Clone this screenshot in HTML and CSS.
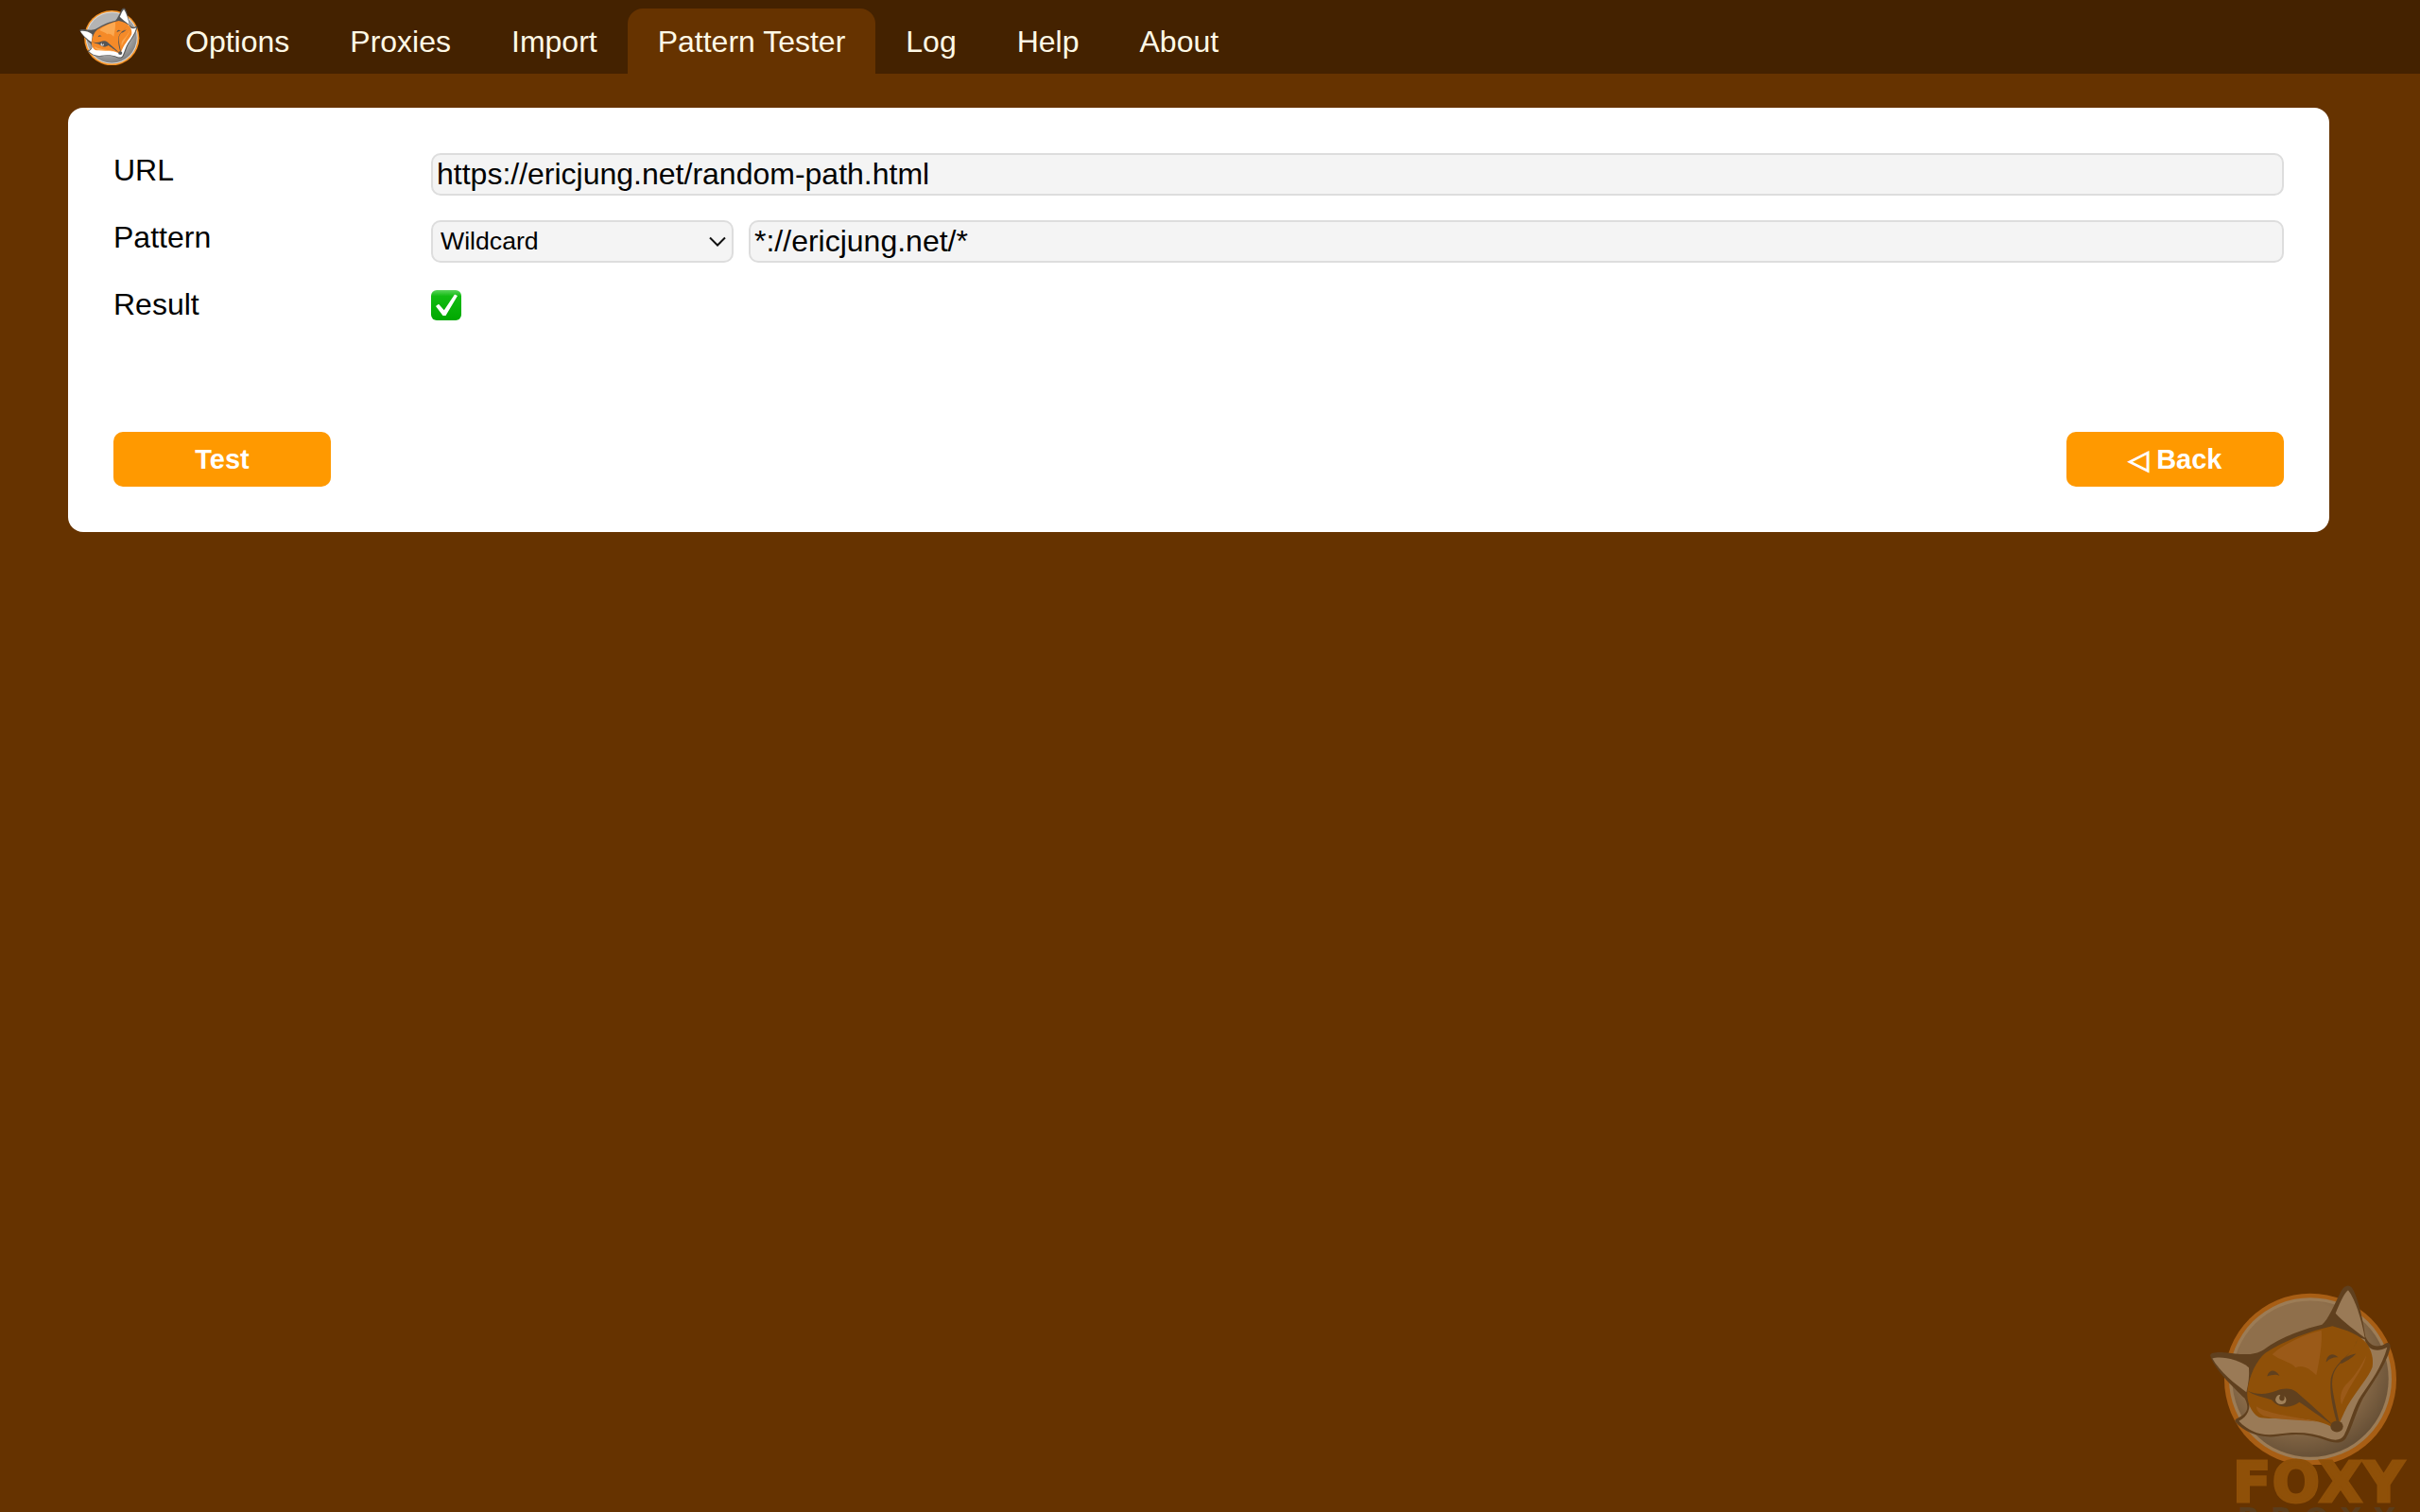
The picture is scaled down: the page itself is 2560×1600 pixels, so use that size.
FILE: index.html
```html
<!DOCTYPE html>
<html lang="en">
<head>
<meta charset="utf-8">
<title>FoxyProxy Options</title>
<link rel="stylesheet" href="styles.css">
</head>
<body>
<svg class="sprite" aria-hidden="true">
  <defs>
    <radialGradient id="disc-shade" gradientUnits="userSpaceOnUse" cx="400" cy="300" r="310">
      <stop offset="0.62" stop-color="#000" stop-opacity="0"/>
      <stop offset="1" stop-color="#000" stop-opacity="0.28"/>
    </radialGradient>
    <symbol id="fox" viewBox="112 58 600 572">
      <circle class="f-ring" cx="433" cy="360" r="273"/>
      <circle class="f-rim" cx="433" cy="358" r="258"/>
      <circle class="f-disc" cx="433" cy="358" r="248"/>
      <circle cx="433" cy="358" r="248" fill="url(#disc-shade)"/>
      <path class="f-line" d="M116 286C112 276 130 272 160 274C205 278 250 288 285 265C340 225 420 197 470 186C490 170 510 120 530 80C540 62 556 56 566 70C585 100 600 170 608 225C620 250 640 262 668 248C680 238 690 245 686 262C670 320 630 370 600 420C578 460 568 510 545 548C530 565 505 562 480 552C430 532 380 530 330 540C280 548 225 530 195 495C190 485 205 482 220 472C238 458 235 440 225 420C190 385 130 330 116 286Z"/>
      <path class="f-ear" d="M513 150C525 120 540 85 553 76C575 105 595 165 606 228C575 205 535 175 513 150Z"/>
      <path class="f-ear" d="M122 293C150 285 205 295 238 322C240 350 236 375 230 400C195 375 145 335 122 293Z"/>
      <path class="f-ear" d="M606 232C612 262 640 277 677 258C660 320 625 367 595 410C570 447 560 497 540 537C530 554 510 554 490 547C440 527 385 524 330 533C280 541 240 528 206 492C235 478 246 450 236 420L260 400L500 200Z"/>
      <path class="f-face" d="M233 395C240 345 262 300 290 276C350 236 430 206 503 190C550 203 590 218 612 245C628 270 634 295 630 320C620 350 580 395 550 445C535 475 530 490 524 498L500 510C470 492 420 484 360 482C320 482 290 486 270 480C245 465 230 430 233 395Z"/>
      <path class="f-glow" d="M312 280C350 245 420 215 468 204C472 240 462 300 452 346C430 325 410 312 386 322C375 305 335 298 312 280Z"/>
      <path class="f-glow" d="M610 285C604 325 560 370 532 440C524 412 532 388 552 370C578 345 594 315 610 285Z"/>
      <path class="f-glow" d="M262 445C300 470 390 478 455 494C400 486 330 490 285 475C270 466 262 458 262 445Z"/>
      <path class="f-line" d="M232 394C262 410 295 408 325 396C345 388 370 385 390 400C430 435 475 475 505 505C465 480 420 445 398 432C375 450 335 455 310 424C285 415 250 410 232 394Z"/>
      <path class="f-eye" d="M322 424C324 412 334 406 338 410C332 416 334 428 344 428C352 426 352 418 350 412C360 420 358 434 346 438C334 441 324 435 322 424Z"/>
      <path class="f-line" d="M296 350C300 332 318 322 335 348C325 342 310 344 296 350Z"/>
      <path class="f-line" d="M483 305C485 285 500 270 522 290C510 288 495 292 483 305Z"/>
      <path class="f-line" d="M583 230C575 262 545 290 518 320C505 340 498 360 505 400C510 430 518 465 524 492L516 492C506 455 495 410 497 370C498 335 520 310 545 288C560 275 575 255 583 230Z"/>
      <path class="f-line" d="M530 300C550 285 565 280 578 278C565 292 548 302 530 310Z"/>
      <ellipse class="f-line" cx="517" cy="509" rx="20" ry="18"/>
    </symbol>
  </defs>
</svg>

<nav class="topbar">
  <svg class="fox fox-nav"><use href="#fox"/></svg>
  <a class="tab">Options</a>
  <a class="tab">Proxies</a>
  <a class="tab">Import</a>
  <a class="tab tab-active">Pattern Tester</a>
  <a class="tab">Log</a>
  <a class="tab">Help</a>
  <a class="tab">About</a>
</nav>

<main class="card">
  <div class="form">
    <label class="label">URL</label>
    <input class="field" type="text" value="https://ericjung.net/random-path.html">
    <label class="label">Pattern</label>
    <div class="pattern">
      <span class="select-wrap">
        <select class="select"><option>Wildcard</option></select>
        <svg class="chevron" viewBox="0 0 18 11"><path d="M1 1.5l8 8 8-8"/></svg>
      </span>
      <input class="field" type="text" value="*://ericjung.net/*">
    </div>
    <label class="label">Result</label>
    <div class="result">
      <svg class="tick" viewBox="0 0 32 32">
        <defs>
          <linearGradient id="tick-bg" x1="0" y1="0" x2="0" y2="1">
            <stop offset="0" stop-color="#5ad45a"/>
            <stop offset="0.2" stop-color="#12bb12"/>
            <stop offset="1" stop-color="#00a800"/>
          </linearGradient>
        </defs>
        <rect width="32" height="32" rx="6" fill="url(#tick-bg)"/>
        <path d="M5 17l3-2.2 5.8 6.5L25 4.5l3 1.5L15.5 27h-3z" fill="#fff"/>
      </svg>
    </div>
  </div>
  <div class="actions">
    <button class="btn" type="button">Test</button>
    <button class="btn" type="button"><span class="btn-arrow">◁</span> Back</button>
  </div>
</main>

<aside class="watermark">
  <svg class="fox fox-mark"><use href="#fox"/></svg>
  <div class="brand">FOXY</div>
  <div class="brand-sub">PROXY</div>
</aside>
</body>
</html>
```
FILE: styles.css
```css
* { box-sizing: border-box; }

html, body { height: 100%; }

body {
  margin: 0;
  background: #663300;
  font-family: "Liberation Sans", Arial, sans-serif;
  color: #000;
  overflow: hidden;
  position: relative;
}

.sprite { position: absolute; width: 0; height: 0; }

.topbar {
  display: flex;
  align-items: flex-end;
  height: 78px;
  padding-left: 84px;
  background: #442200;
}

.fox-nav {
  width: 64px;
  height: 61px;
  margin: 0 16px 9px 0;
  --ring: #f7962a;
  --rim: #d8d8d8;
  --disc: #b4b4b4;
  --line: #555555;
  --ear: #ffffff;
  --face: #f58a28;
  --glow: #fba952;
  --eye: #dddddd;
}

.tab {
  display: flex;
  align-items: center;
  height: 69px;
  padding: 0 32px;
  border-radius: 16px 16px 0 0;
  color: #fff9e6;
  font-size: 32px;
  line-height: 1;
}

.tab-active { background: #663300; }

.card {
  display: flex;
  flex-direction: column;
  margin: 36px 96px 0 72px;
  padding: 48px;
  border-radius: 16px;
  background: #fff;
}

.form {
  display: grid;
  grid-template-columns: 336px 1fr;
  grid-auto-rows: 45px;
  row-gap: 26px;
}

.label {
  font-size: 32px;
  line-height: 37px;
}

.field {
  display: block;
  width: 100%;
  min-width: 0;
  height: 45px;
  padding: 0 4px;
  border: 2px solid #dddddd;
  border-radius: 10px;
  background: #f4f4f4;
  color: #000;
  font: 32px "Liberation Sans", Arial, sans-serif;
  outline: none;
}

.pattern {
  display: grid;
  grid-template-columns: 320px 1fr;
  column-gap: 16px;
}

.select-wrap { position: relative; display: block; }

.select {
  display: block;
  width: 100%;
  height: 45px;
  padding: 0 8px 2px;
  border: 2px solid #dddddd;
  border-radius: 10px;
  background: #f4f4f4;
  color: #000;
  font: 26.67px "Liberation Sans", Arial, sans-serif;
  appearance: none;
  outline: none;
}

.chevron {
  position: absolute;
  top: 17px;
  right: 8px;
  width: 18px;
  height: 11px;
  fill: none;
  stroke: #111;
  stroke-width: 2;
}

.result { padding-top: 3px; }

.tick { display: block; width: 32px; height: 32px; }

.actions {
  display: flex;
  justify-content: space-between;
  margin-top: 108px;
}

.btn {
  width: 230px;
  height: 58px;
  padding: 0;
  border: 0;
  border-radius: 10px;
  background: #ff9900;
  color: #fff;
  font: bold 29px "Liberation Sans", "DejaVu Sans", sans-serif;
}

.btn-arrow {
  font-family: "DejaVu Sans", sans-serif;
  font-size: 28px;
  font-weight: normal;
  line-height: 1;
  -webkit-text-stroke: 1.2px #fff;
}

.watermark {
  position: absolute;
  right: 0;
  bottom: 0;
  width: 223px;
  height: 241px;
  --ring: #a85e14;
  --rim: #9c7c56;
  --disc: #8f6f4b;
  --line: #60401e;
  --ear: #9a7a56;
  --face: #8f5008;
  --glow: #9b5a18;
  --eye: #a08058;
}

.fox-mark {
  position: absolute;
  left: 0;
  top: 0;
  width: 200px;
  height: 191px;
}

.brand {
  position: absolute;
  left: 25px;
  top: 185px;
  font: bold 59px/50px "DejaVu Sans", sans-serif;
  letter-spacing: 1.5px;
  color: #8f5008;
  -webkit-text-stroke: 3px #8f5008;
}

.brand-sub {
  position: absolute;
  left: 30px;
  top: 233px;
  font: bold 30px/30px "DejaVu Sans", sans-serif;
  letter-spacing: 13px;
  white-space: nowrap;
  color: #5a3d1c;
}

.f-ring { fill: var(--ring); }
.f-rim { fill: var(--rim); }
.f-disc { fill: var(--disc); }
.f-line { fill: var(--line); }
.f-ear { fill: var(--ear); }
.f-face { fill: var(--face); }
.f-glow { fill: var(--glow); }
.f-eye { fill: var(--eye); }
```
